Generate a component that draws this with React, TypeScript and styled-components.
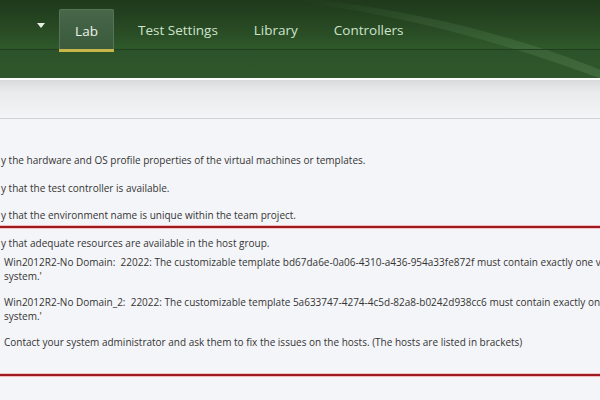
import React from "react";
import styled, { createGlobalStyle } from "styled-components";

const Global = createGlobalStyle`
  html, body { margin: 0; padding: 0; }
  body { width: 600px; height: 400px; overflow: hidden; background: #f4f5f8; font-family: "Open Sans", "Noto Sans", sans-serif; }
`;

const Page = styled.div`
  width: 600px;
  height: 400px;
  display: flex;
  flex-direction: column;
  overflow: hidden;
`;

const Header = styled.header`
  position: relative;
  height: 78px;
  flex: none;
  background: linear-gradient(180deg, #1e391b 0%, #2a4e26 45%, #2f5a2b 62%, #2c5229 63%, #30572c 100%);
  display: flex;
  flex-direction: column;
  overflow: hidden;
`;

const Swoosh = styled.svg`
  position: absolute;
  inset: 0;
  pointer-events: none;
`;

const NavRow = styled.nav`
  position: relative;
  height: 49px;
  display: flex;
  align-items: stretch;
  padding-left: 34px;
  border-bottom: 1px solid #223d1f;
`;

const Dropdown = styled.div`
  width: 14px;
  display: flex;
  align-items: center;
  justify-content: center;
  margin-right: 11px;
  padding-top: 2px;
`;

const Tab = styled.div<{ $active?: boolean }>`
  position: relative;
  display: flex;
  align-items: center;
  justify-content: center;
  margin-top: 9px;
  width: ${(p) => (p.$active ? "55px" : "auto")};
  box-sizing: border-box;
  margin-right: ${(p) => (p.$active ? "24px" : "36px")};
  padding-top: 2px;
  font-size: 13.5px;
  color: ${(p) => (p.$active ? "#eef3ea" : "#cfe3cc")};
  background: ${(p) => (p.$active ? "linear-gradient(180deg, #47664a 0%, #3a5a3b 100%)" : "transparent")};
  border: ${(p) => (p.$active ? "1px solid #557556" : "none")};
  border-bottom: none;
  border-radius: 2px 2px 0 0;
  ${(p) =>
    p.$active &&
    `&::after { content: ""; position: absolute; left: -1px; right: -1px; bottom: -3px; height: 3px; background: #c9b64a; }`}
`;

const SubBar = styled.div`
  flex: 1;
`;

const Toolbar = styled.div`
  height: 38px;
  flex: none;
  border-top: 2px solid #ffffff;
  border-bottom: 1px solid #d2d3d6;
  background: linear-gradient(180deg, #d9dadc 0%, #e9eaec 30%, #f3f4f6 100%);
`;

const Content = styled.main`
  flex: 1;
  padding-top: 34px;
  color: #343434;
  font-size: 10px;
  line-height: 14px;
  background: #f4f5f8;
`;

const Item = styled.p<{ $gap?: number }>`
  margin: 0 0 ${(p) => p.$gap ?? 13.5}px 0;
  white-space: nowrap;
  padding-left: 1px;
`;

const ErrorBox = styled.section`
  margin-left: -10px;
  border-top: 2px solid #9d1b20;
  border-bottom: 2px solid #9d1b20;
  box-shadow: 0 -1px 0 #f3b9bc, 0 1px 0 #f3b9bc, inset 0 1px 0 #f3c3c6, inset 0 -1px 0 #f3c3c6;
  padding: 8px 0 0 11px;
  height: 150px;
  box-sizing: border-box;
  overflow: hidden;
`;

const ErrLine = styled.p<{ $indent?: boolean; $gap?: number }>`
  margin: 0 0 ${(p) => p.$gap ?? 0}px 0;
  padding-left: ${(p) => (p.$indent ? "3px" : "0")};
  white-space: nowrap;
`;

export default function App() {
  return (
    <Page>
      <Global />
      <Header>
        <Swoosh width="600" height="78" viewBox="0 0 600 78">
          <defs>
            <linearGradient id="sw" x1="0" y1="0" x2="1" y2="0">
              <stop offset="0" stopColor="#7fb07a" stopOpacity="0" />
              <stop offset="0.4" stopColor="#7fb07a" stopOpacity="0.12" />
              <stop offset="1" stopColor="#8fbf8a" stopOpacity="0.18" />
            </linearGradient>
          </defs>
          <path d="M300 -2 C 420 10, 530 40, 610 74 L 610 82 C 520 48, 420 18, 300 2 Z" fill="url(#sw)" />
        </Swoosh>
        <NavRow>
          <Dropdown>
            <svg width="8" height="5" viewBox="0 0 8 5">
              <path d="M0 0 L8 0 L4 5 Z" fill="#e8efe6" />
            </svg>
          </Dropdown>
          <Tab $active>Lab</Tab>
          <Tab>Test Settings</Tab>
          <Tab>Library</Tab>
          <Tab>Controllers</Tab>
        </NavRow>
        <SubBar />
      </Header>
      <Toolbar />
      <Content>
        <Item>y the hardware and OS profile properties of the virtual machines or templates.</Item>
        <Item>y that the test controller is available.</Item>
        <Item $gap={4}>y that the environment name is unique within the team project.</Item>
        <ErrorBox>
          <ErrLine $gap={5}>y that adequate resources are available in the host group.</ErrLine>
          <ErrLine $indent>
            Win2012R2-No Domain:&nbsp; 22022: The customizable template bd67da6e-0a06-4310-a436-954a33fe872f must contain exactly one v
          </ErrLine>
          <ErrLine $indent $gap={12}>system.'</ErrLine>
          <ErrLine $indent>
            Win2012R2-No Domain_2:&nbsp; 22022: The customizable template 5a633747-4274-4c5d-82a8-b0242d938cc6 must contain exactly on
          </ErrLine>
          <ErrLine $indent $gap={12}>system.'</ErrLine>
          <ErrLine $indent>
            Contact your system administrator and ask them to fix the issues on the hosts. (The hosts are listed in brackets)
          </ErrLine>
        </ErrorBox>
      </Content>
    </Page>
  );
}
